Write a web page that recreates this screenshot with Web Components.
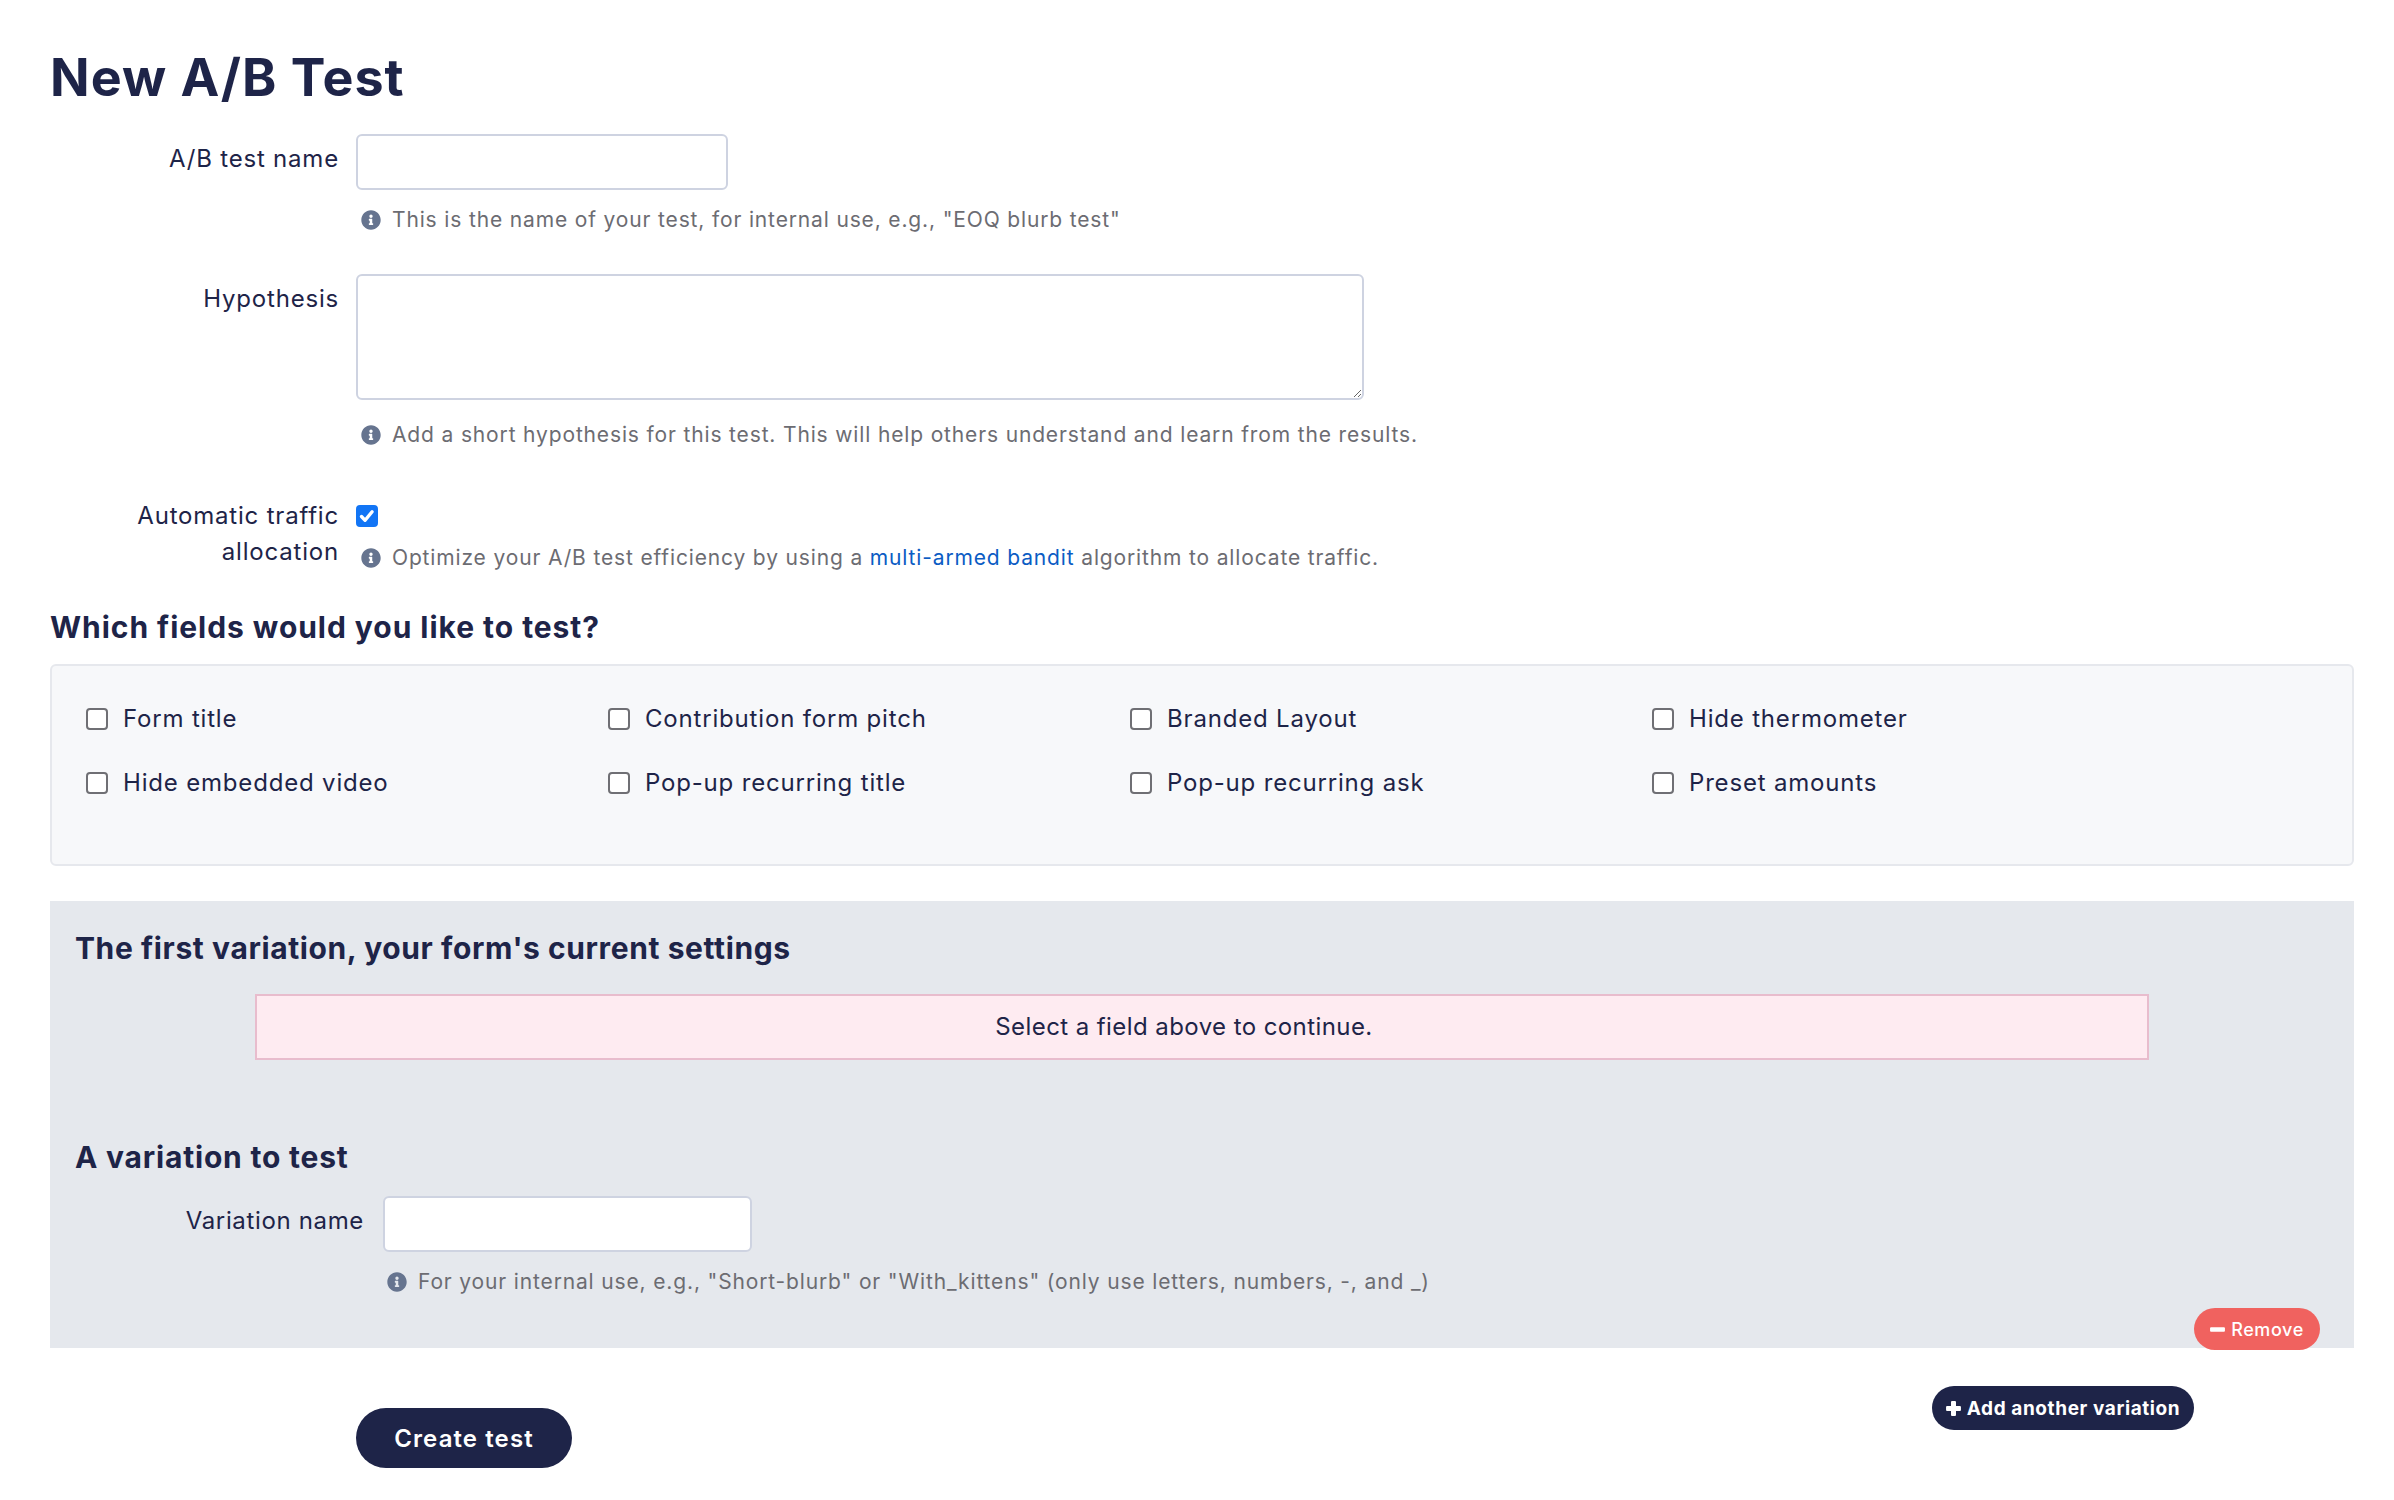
<!DOCTYPE html>
<html lang="en">
<head>
<meta charset="utf-8">
<title>New A/B Test</title>
<style>
  html, body { margin: 0; background: #fff; }
  body { font-family: Inter, "Liberation Sans", sans-serif; color: #1e2448; overflow: hidden; }
</style>
</head>
<body>
<ab-test-page></ab-test-page>

<script>
const INFO = "M256 8C119.043 8 8 119.083 8 256c0 136.997 111.043 248 248 248s248-111.003 248-248C504 119.083 392.957 8 256 8zm0 110c23.196 0 42 18.804 42 42s-18.804 42-42 42-42-18.804-42-42 18.804-42 42-42zm56 254c0 6.627-5.373 12-12 12h-88c-6.627 0-12-5.373-12-12v-24c0-6.627 5.373-12 12-12h12v-64h-12c-6.627 0-12-5.373-12-12v-24c0-6.627 5.373-12 12-12h64c6.627 0 12 5.373 12 12v100h12c6.627 0 12 5.373 12 12v24z";
const PLUS = "M149 62a30 30 0 0 1 30-30h90a30 30 0 0 1 30 30v119h119a30 30 0 0 1 30 30v90a30 30 0 0 1-30 30H299v119a30 30 0 0 1-30 30h-90a30 30 0 0 1-30-30V331H30a30 30 0 0 1-30-30v-90a30 30 0 0 1 30-30h119z";
const MINUS = "M30 190h388a30 30 0 0 1 30 30v72a30 30 0 0 1-30 30H30a30 30 0 0 1-30-30v-72a30 30 0 0 1 30-30z";

class HelpText extends HTMLElement {
  constructor() {
    super();
    this.attachShadow({mode: "open"}).innerHTML = `
      <style>
        :host { display: flex; align-items: center; gap: 11px; padding-left: var(--help-pad, 5px); font-size: 21px; line-height: 30px; letter-spacing: .85px; color: #6c6c72; }
        svg { width: 20px; height: 20px; fill: #66748f; flex: none; }
        ::slotted(a) { color: #0b5cc4; text-decoration: none; }
      </style>
      <svg viewBox="0 0 512 512"><path d="${INFO}"/></svg>
      <span><slot></slot></span>`;
  }
}
customElements.define("help-text", HelpText);

class CheckBox extends HTMLElement {
  constructor() {
    super();
    const checked = this.hasAttribute("checked");
    this.attachShadow({mode: "open"}).innerHTML = `
      <style>
        :host { display: inline-grid; width: 22px; height: 22px; flex: none; }
        input, svg { grid-area: 1 / 1; margin: 0; width: 22px; height: 22px; }
        input { appearance: none; box-sizing: border-box; background: #fff; border: 2px solid #6f6f74; border-radius: 4px; }
        input:checked { background: #1275f5; border-color: #1275f5; }
        svg { pointer-events: none; fill: none; stroke: #fff; stroke-width: 3.4; stroke-linecap: round; stroke-linejoin: round; }
      </style>
      <input type="checkbox" ${checked ? "checked" : ""}>
      ${checked ? '<svg viewBox="0 0 22 22"><path d="M5.5 11.5l3.6 3.8 7-8.6"/></svg>' : ""}`;
  }
}
customElements.define("check-box", CheckBox);

class FormRow extends HTMLElement {
  constructor() {
    super();
    this.attachShadow({mode: "open"}).innerHTML = `
      <style>
        :host { display: grid; grid-template-columns: 288px 1fr; column-gap: var(--row-gap, 18px); font-size: 24px; line-height: 36px; letter-spacing: .8px; }
        .label { text-align: right; padding-top: var(--label-pad, 7px); padding-left: 2px; margin-right: -1px; }
        .field { min-width: 0; }
      </style>
      <div class="label"><slot name="label"></slot></div>
      <div class="field"><slot></slot></div>`;
  }
}
customElements.define("form-row", FormRow);

class TextField extends HTMLElement {
  constructor() {
    super();
    const w = this.getAttribute("width") || "372";
    this.attachShadow({mode: "open"}).innerHTML = `
      <style>
        :host { display: block; width: ${w}px; }
        input { display: block; box-sizing: border-box; width: 100%; height: 56px; margin: 0; background: #fff; border: 2px solid #ced3e1; border-radius: 6px; font: inherit; }
      </style>
      <input type="text">`;
  }
}
customElements.define("text-field", TextField);

class TextArea extends HTMLElement {
  constructor() {
    super();
    this.attachShadow({mode: "open"}).innerHTML = `
      <style>
        :host { display: block; width: 1008px; height: 126px; }
        textarea { display: block; box-sizing: border-box; width: 100%; height: 100%; margin: 0; background: #fff; border: 2px solid #ced3e1; border-radius: 6px; font: inherit; resize: vertical; }
      </style>
      <textarea></textarea>`;
  }
}
customElements.define("text-area", TextArea);

class FieldOption extends HTMLElement {
  constructor() {
    super();
    this.attachShadow({mode: "open"}).innerHTML = `
      <style>
        :host { display: flex; align-items: center; gap: 15px; font-size: 24px; line-height: 36px; letter-spacing: .82px; }
      </style>
      <check-box></check-box><span><slot></slot></span>`;
  }
}
customElements.define("field-option", FieldOption);

class FieldPanel extends HTMLElement {
  constructor() {
    super();
    this.attachShadow({mode: "open"}).innerHTML = `
      <style>
        :host { display: grid; grid-template-columns: repeat(4, 522px); row-gap: 28px; box-sizing: border-box; height: 202px; padding: 35px 34px 0; background: #f7f8fa; border: 2px solid #e6e8ed; border-radius: 6px; align-content: start; }
      </style>
      <slot></slot>`;
  }
}
customElements.define("field-panel", FieldPanel);

class SectionTitle extends HTMLElement {
  constructor() {
    super();
    this.attachShadow({mode: "open"}).innerHTML = `
      <style>
        :host { display: block; font-size: 30px; line-height: 40px; font-weight: 700; letter-spacing: .6px; }
      </style>
      <slot></slot>`;
  }
}
customElements.define("section-title", SectionTitle);

class AlertBox extends HTMLElement {
  constructor() {
    super();
    this.attachShadow({mode: "open"}).innerHTML = `
      <style>
        :host { display: block; box-sizing: border-box; height: 66px; margin: 0 180px; padding-right: 36px; background: #feebf1; border: 2px solid #e8bccd; font-size: 24px; line-height: 62px; letter-spacing: .42px; text-align: center; }
      </style>
      <slot></slot>`;
  }
}
customElements.define("alert-box", AlertBox);

class PillButton extends HTMLElement {
  constructor() {
    super();
    const icon = this.getAttribute("icon");
    const d = icon === "plus" ? PLUS : MINUS;
    this.attachShadow({mode: "open"}).innerHTML = `
      <style>
        :host { display: inline-flex; align-items: center; justify-content: center; gap: 6px; box-sizing: border-box; border-radius: 999px; background: var(--pill-bg, #1e2448); color: #fff; font-weight: var(--pill-weight, 600); font-size: var(--pill-size, 18px); letter-spacing: var(--pill-track, .6px); white-space: nowrap; }
        svg { width: 15px; height: 17px; fill: #fff; flex: none; }
      </style>
      ${icon ? `<svg viewBox="0 0 448 512"><path d="${d}"/></svg>` : ""}
      <slot></slot>`;
  }
}
customElements.define("pill-button", PillButton);

class VariationPanel extends HTMLElement {
  constructor() {
    super();
    this.attachShadow({mode: "open"}).innerHTML = `
      <style>
        :host { display: block; position: relative; box-sizing: border-box; height: 447px; margin-top: 35px; padding: 27px 25px 0; background: #e5e8ed; --row-gap: 20px; --help-pad: 4px; }
        section-title { margin-bottom: 26px; }
        .second { margin-top: 77px; margin-bottom: 19px; letter-spacing: .8px; }
        text-field + help-text { margin-top: 15px; }
        form-row { letter-spacing: .65px; }
        help-text { letter-spacing: .85px; }
        pill-button { position: absolute; right: 34px; bottom: -2px; width: 126px; height: 42px; --pill-bg: #f0625f; --pill-weight: 500; }
      </style>
      <section-title>The first variation, your form's current settings</section-title>
      <alert-box>Select a field above to continue.</alert-box>
      <section-title class="second">A variation to test</section-title>
      <form-row>
        <span slot="label">Variation name</span>
        <text-field width="369"></text-field>
        <help-text>For your internal use, e.g., "Short-blurb" or "With_kittens" (only use letters, numbers, -, and _)</help-text>
      </form-row>
      <pill-button icon="minus">Remove</pill-button>`;
  }
}
customElements.define("variation-panel", VariationPanel);

class AbTestPage extends HTMLElement {
  constructor() {
    super();
    this.attachShadow({mode: "open"}).innerHTML = `
      <style>
        :host { display: block; box-sizing: border-box; width: 2394px; height: 1500px; padding: 45px 40px 0 50px; }
        h1 { margin: 0 0 23px; font-size: 52px; line-height: 66px; font-weight: 700; letter-spacing: 1px; }
        form-row { margin-bottom: 39px; }
        text-field + help-text { margin-top: 15px; }
        text-area + help-text { margin-top: 20px; }
        .hypo { margin-bottom: 48px; }
        .auto { margin-bottom: 34px; --label-pad: 0; }
        .auto help-text { margin-top: 9px; }
        .check { height: 36px; display: flex; align-items: center; }
        .fields-title { margin-bottom: 17px; letter-spacing: .95px; }
        .actions { display: flex; justify-content: space-between; align-items: flex-start; padding: 0 160px 0 306px; }
        .create { width: 216px; height: 60px; margin-top: 60px; --pill-size: 24px; --pill-weight: 600; --pill-track: 1.1px; }
        .add { width: 262px; height: 44px; margin-top: 38px; --pill-size: 19px; --pill-weight: 700; }
      </style>
      <h1>New A/B Test</h1>
      <form-row>
        <span slot="label">A/B test name</span>
        <text-field></text-field>
        <help-text>This is the name of your test, for internal use, e.g., "EOQ blurb test"</help-text>
      </form-row>
      <form-row class="hypo">
        <span slot="label">Hypothesis</span>
        <text-area></text-area>
        <help-text>Add a short hypothesis for this test. This will help others understand and learn from the results.</help-text>
      </form-row>
      <form-row class="auto">
        <span slot="label">Automatic traffic allocation</span>
        <div class="check"><check-box checked></check-box></div>
        <help-text>Optimize your A/B test efficiency by using a <a href="#">multi-armed bandit</a> algorithm to allocate traffic.</help-text>
      </form-row>
      <section-title class="fields-title">Which fields would you like to test?</section-title>
      <field-panel>
        <field-option>Form title</field-option>
        <field-option>Contribution form pitch</field-option>
        <field-option>Branded Layout</field-option>
        <field-option>Hide thermometer</field-option>
        <field-option>Hide embedded video</field-option>
        <field-option>Pop-up recurring title</field-option>
        <field-option>Pop-up recurring ask</field-option>
        <field-option>Preset amounts</field-option>
      </field-panel>
      <variation-panel></variation-panel>
      <div class="actions">
        <pill-button class="create">Create test</pill-button>
        <pill-button class="add" icon="plus">Add another variation</pill-button>
      </div>`;
  }
}
customElements.define("ab-test-page", AbTestPage);
</script>
</body>
</html>
